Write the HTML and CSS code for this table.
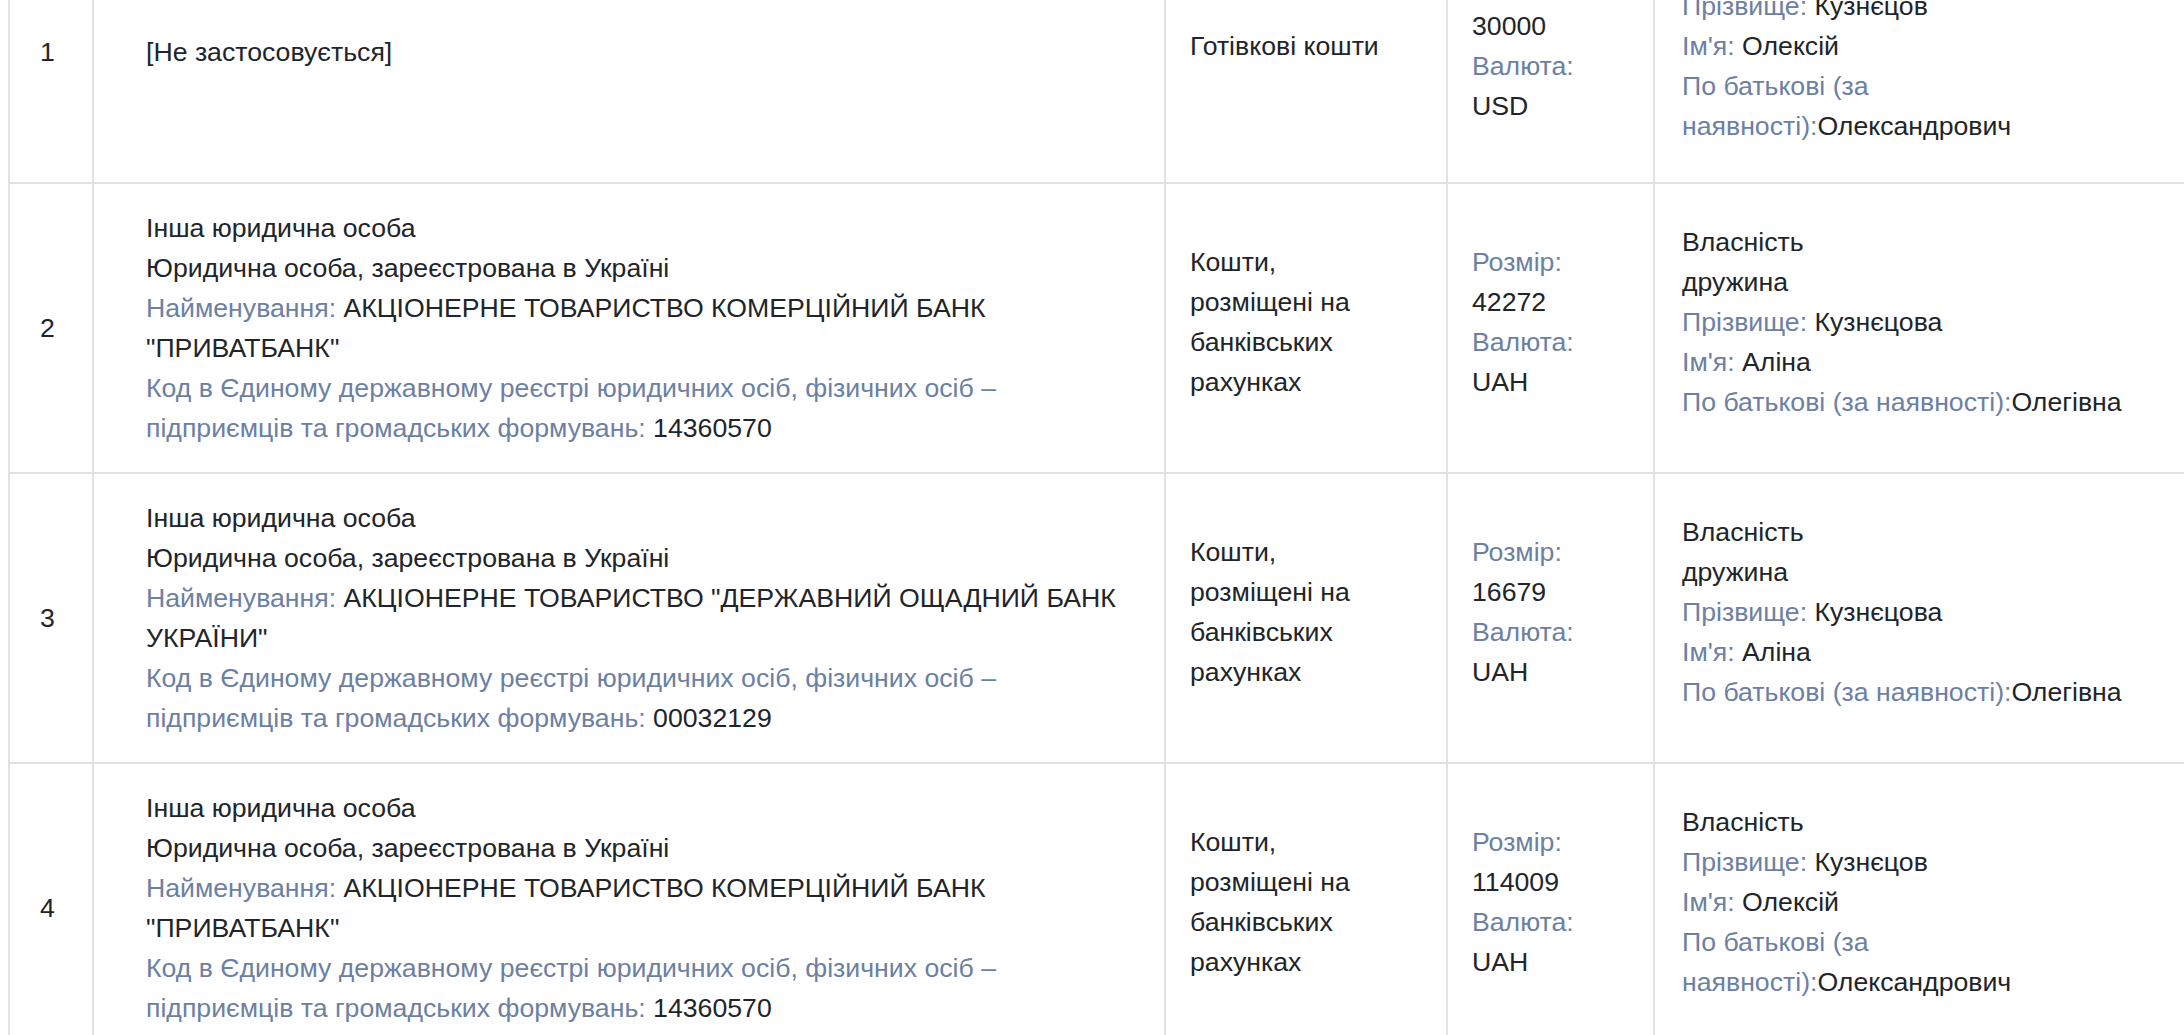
FILE: index.html
```html
<!DOCTYPE html>
<html lang="uk">
<head>
  <meta charset="UTF-8">
  <title>Грошові активи</title>
  <meta name="viewport" content="width=device-width, initial-scale=1.0">
  <link rel="stylesheet" href="styles.css">
</head>
<body>
  <!-- Assets table (scrolled part) -->
  <table class="assets">
    <colgroup>
      <col class="c-num">
      <col class="c-org">
      <col class="c-type">
      <col class="c-size">
      <col class="c-owner">
    </colgroup>
    <tbody>
      <tr>
        <td class="num">1</td>
        <td class="org">[Не застосовується]</td>
        <td class="side">Готівкові кошти</td>
        <td class="side">
          <div><span class="label">Розмір:</span> 30000</div>
          <div><span class="label">Валюта:</span> USD</div>
        </td>
        <td class="side owner">
          <div>Власність</div>
          <div><span class="label">Прізвище:</span> Кузнєцов</div>
          <div><span class="label">Ім'я:</span> Олексій</div>
          <div><span class="label">По батькові (за наявності):</span>Олександрович</div>
        </td>
      </tr>
      <tr>
        <td class="num">2</td>
        <td class="org">
          <div>Інша юридична особа</div>
          <div>Юридична особа, зареєстрована в Україні</div>
          <div><span class="label">Найменування:</span> АКЦІОНЕРНЕ ТОВАРИСТВО КОМЕРЦІЙНИЙ БАНК "ПРИВАТБАНК"</div>
          <div><span class="label">Код в Єдиному державному реєстрі юридичних осіб, фізичних осіб – підприємців та громадських формувань:</span> 14360570</div>
        </td>
        <td class="side">Кошти, розміщені на банківських рахунках</td>
        <td class="side">
          <div><span class="label">Розмір:</span> 42272</div>
          <div><span class="label">Валюта:</span> UAH</div>
        </td>
        <td class="side owner">
          <div>Власність</div>
          <div>дружина</div>
          <div><span class="label">Прізвище:</span> Кузнєцова</div>
          <div><span class="label">Ім'я:</span> Аліна</div>
          <div><span class="label">По батькові (за наявності):</span>Олегівна</div>
        </td>
      </tr>
      <tr>
        <td class="num">3</td>
        <td class="org">
          <div>Інша юридична особа</div>
          <div>Юридична особа, зареєстрована в Україні</div>
          <div><span class="label">Найменування:</span> АКЦІОНЕРНЕ ТОВАРИСТВО "ДЕРЖАВНИЙ ОЩАДНИЙ БАНК УКРАЇНИ"</div>
          <div><span class="label">Код в Єдиному державному реєстрі юридичних осіб, фізичних осіб – підприємців та громадських формувань:</span> 00032129</div>
        </td>
        <td class="side">Кошти, розміщені на банківських рахунках</td>
        <td class="side">
          <div><span class="label">Розмір:</span> 16679</div>
          <div><span class="label">Валюта:</span> UAH</div>
        </td>
        <td class="side owner">
          <div>Власність</div>
          <div>дружина</div>
          <div><span class="label">Прізвище:</span> Кузнєцова</div>
          <div><span class="label">Ім'я:</span> Аліна</div>
          <div><span class="label">По батькові (за наявності):</span>Олегівна</div>
        </td>
      </tr>
      <tr>
        <td class="num">4</td>
        <td class="org">
          <div>Інша юридична особа</div>
          <div>Юридична особа, зареєстрована в Україні</div>
          <div><span class="label">Найменування:</span> АКЦІОНЕРНЕ ТОВАРИСТВО КОМЕРЦІЙНИЙ БАНК "ПРИВАТБАНК"</div>
          <div><span class="label">Код в Єдиному державному реєстрі юридичних осіб, фізичних осіб – підприємців та громадських формувань:</span> 14360570</div>
        </td>
        <td class="side">Кошти, розміщені на банківських рахунках</td>
        <td class="side">
          <div><span class="label">Розмір:</span> 114009</div>
          <div><span class="label">Валюта:</span> UAH</div>
        </td>
        <td class="side owner">
          <div>Власність</div>
          <div><span class="label">Прізвище:</span> Кузнєцов</div>
          <div><span class="label">Ім'я:</span> Олексій</div>
          <div><span class="label">По батькові (за наявності):</span>Олександрович</div>
        </td>
      </tr>
    </tbody>
  </table>
</body>
</html>
```

FILE: styles.css
```css
/* Basic styling */
html {
  overflow: hidden;
}
body {
  margin: 0 0 0 8px;
  font-family: "Liberation Sans", Arial, Helvetica, sans-serif;
  font-size: 26.67px;
  line-height: 40px;
  color: #212529;
  background-color: #fff;
}
.assets {
  margin-top: -78px;
  table-layout: fixed;
  width: 2192px;
  border-collapse: separate;
  border-spacing: 0;
  border-left: 2px solid #dee2e6;
}
.c-num { width: 84px; }
.c-org { width: 1072px; }
.c-type { width: 282px; }
.c-size { width: 207px; }
.c-owner { width: 545px; }

.assets td {
  vertical-align: middle;
  border-right: 2px solid #dee2e6;
  border-bottom: 2px solid #dee2e6;
  padding: 24px 52px 24px 24px;
}
.assets td.num {
  padding: 24px 8px 24px 30px;
}
.assets td.org {
  padding: 24px 44px 24px 52px;
}
.assets td.side {
  padding-bottom: 36px;
}
.assets td.owner {
  padding-left: 27px;
  padding-right: 49px;
}
.label {
  color: #6c80a3;
}
```
